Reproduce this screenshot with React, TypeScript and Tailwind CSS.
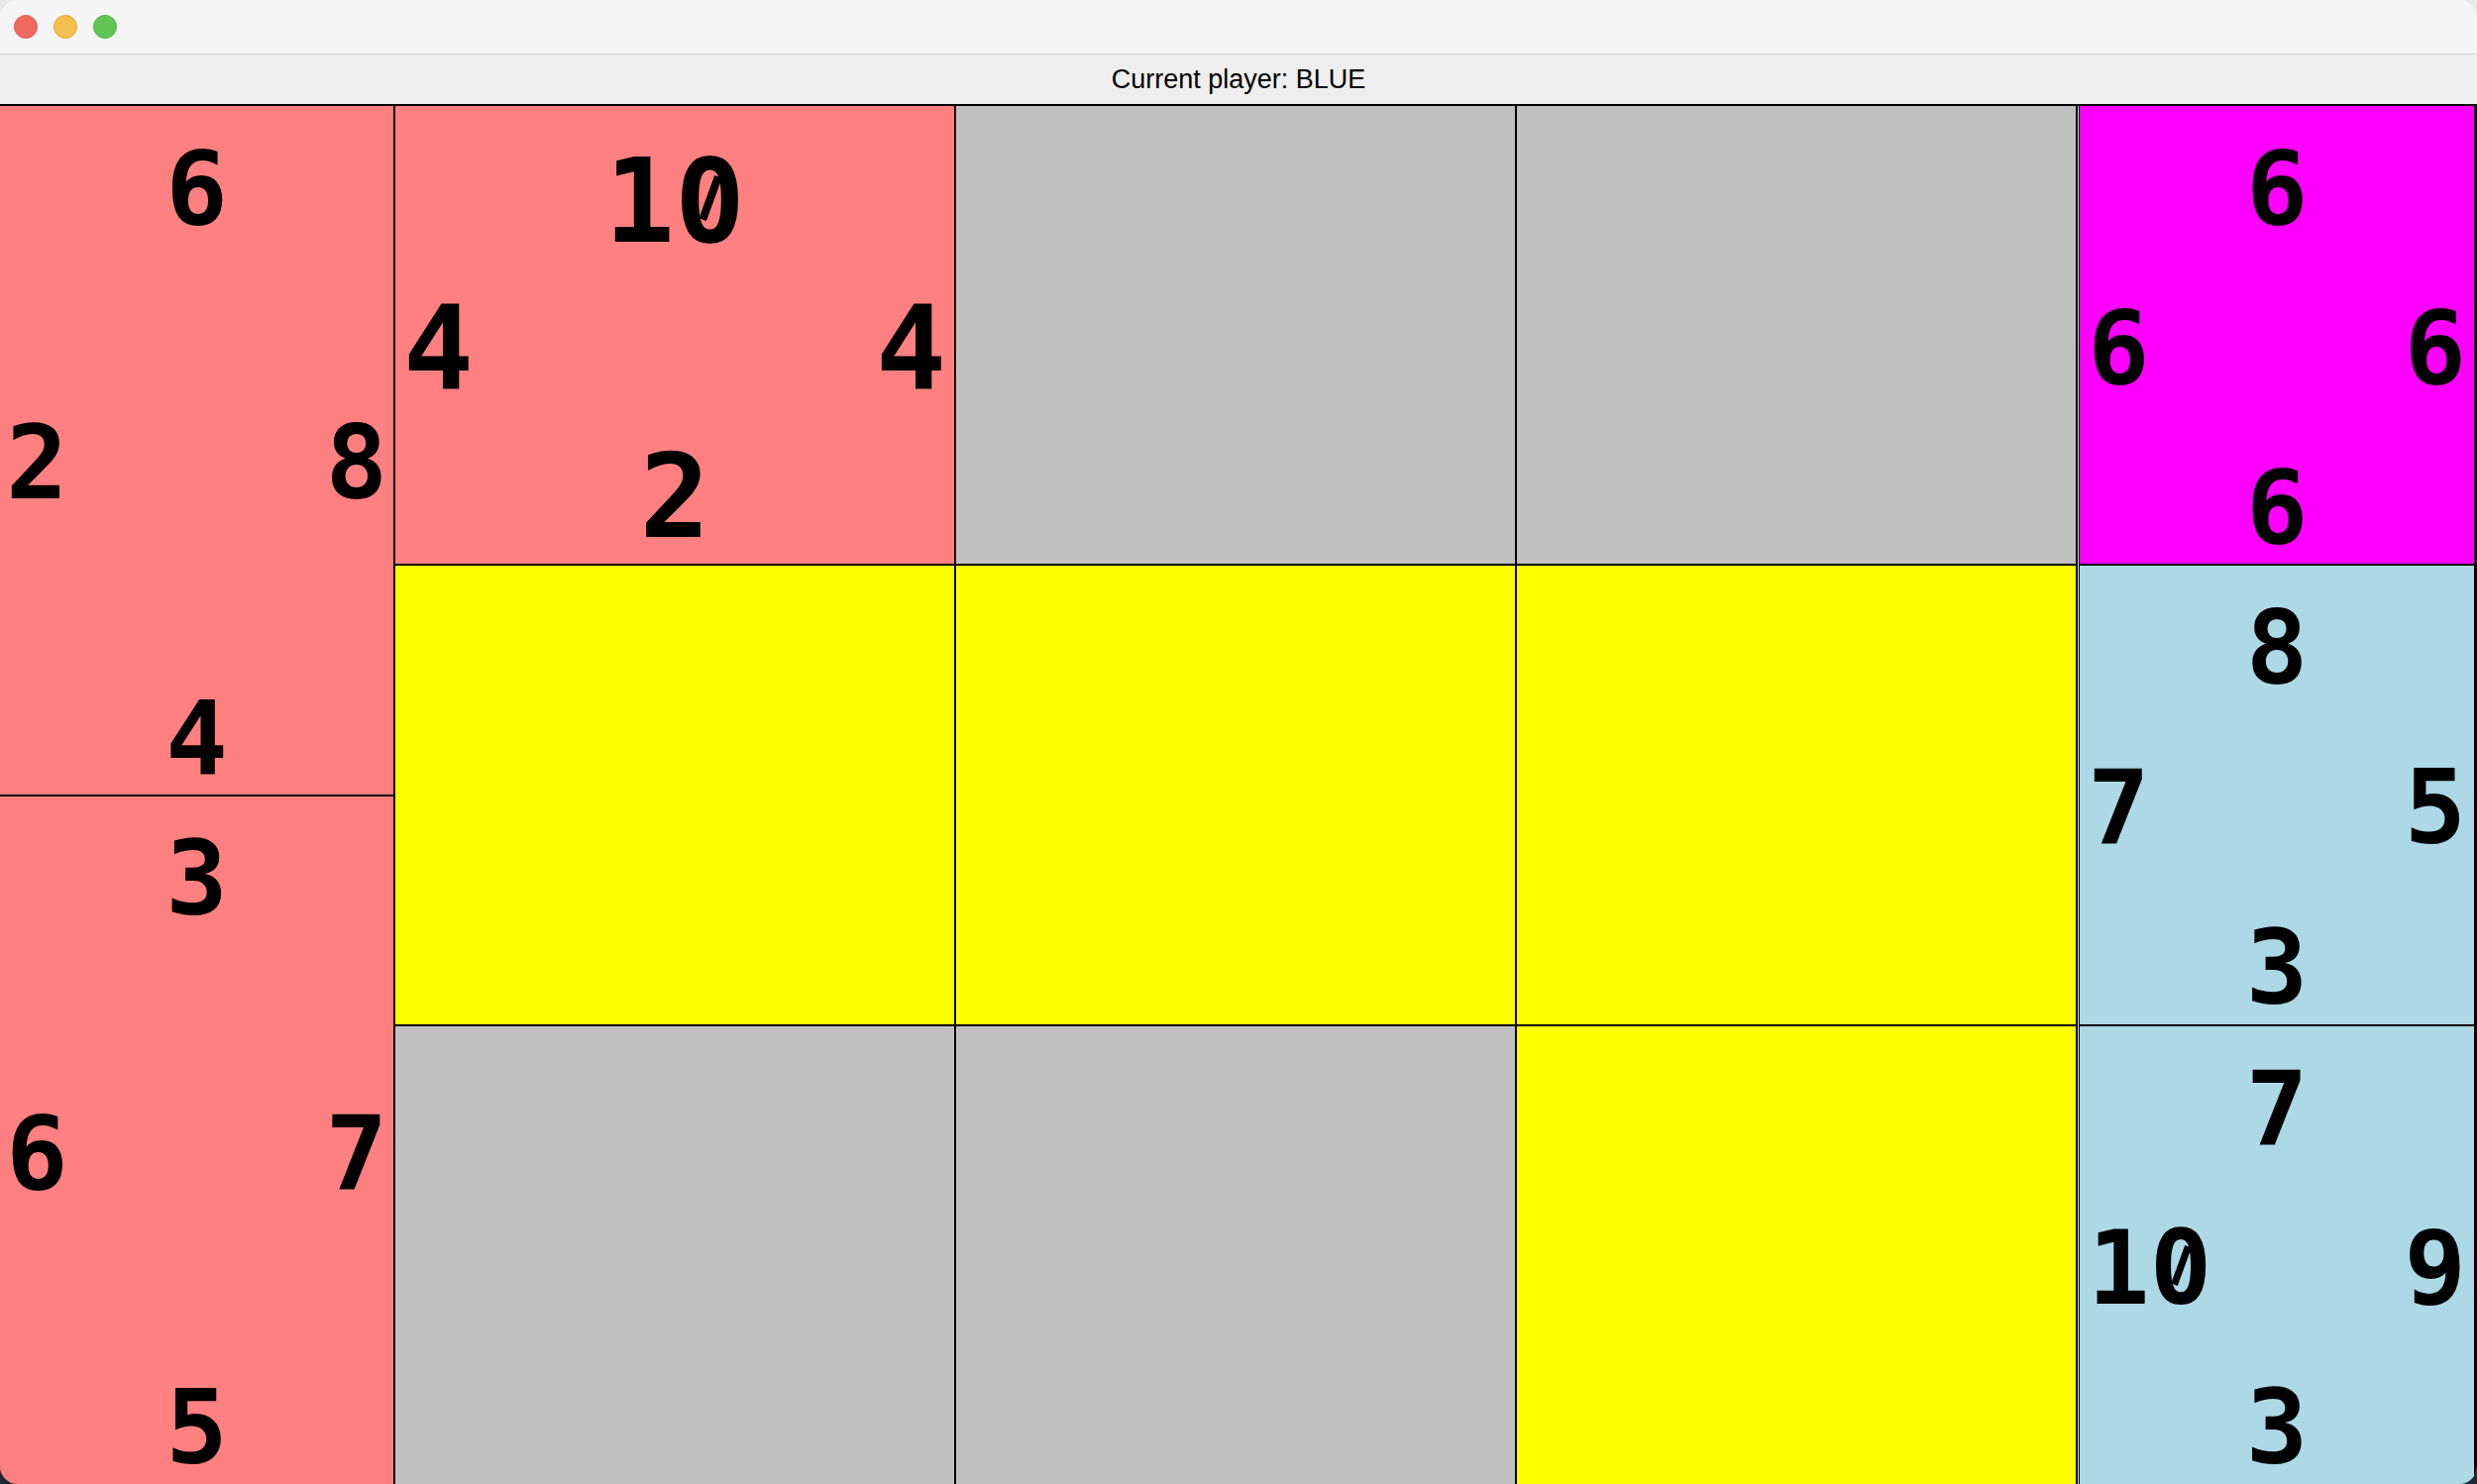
import React from "react";

type TileProps = {
  top?: string;
  left?: string;
  right?: string;
  bottom?: string;
  bg: string;
  size: "small" | "large" | "none";
  side?: string;
};

function Zero({ bg }: { bg: string }) {
  return (
    <span className="relative inline-block">
      0
      <span className={`absolute left-[0.226em] top-[0.35em] h-[0.26em] w-[0.15em] rounded-full ${bg}`} />
      <span className="absolute left-[0.2695em] top-[0.278em] h-[0.394em] w-[0.066em] rotate-[20deg] bg-black" />
    </span>
  );
}

function Num({ text, bg }: { text?: string; bg: string }) {
  if (!text) return null;
  return (
    <span className="inline-block">
      {text.split("").map((ch, i) =>
        ch === "0" ? <Zero key={i} bg={bg} /> : <React.Fragment key={i}>{ch}</React.Fragment>
      )}
    </span>
  );
}

function Tile({ top, left, right, bottom, bg, size, side }: TileProps) {
  if (size === "none") {
    return <div className={`${bg} min-h-0 min-w-0`} />;
  }
  const variant =
    size === "large"
      ? "text-[118px] pt-[37px] pb-[9px] px-[8px]"
      : side === "left"
      ? "text-[104px] pt-[31px] pb-[5px] px-[6px]"
      : "text-[104px] pt-[31px] pb-[5px] px-[8px]";
  return (
    <div
      className={`${bg} ${variant} flex min-h-0 min-w-0 flex-1 flex-col font-['DejaVu_Sans_Mono',monospace] font-bold leading-none text-black`}
    >
      <div className="text-center">
        <Num text={top} bg={bg} />
      </div>
      <div className="flex flex-1 items-center justify-between">
        <Num text={left} bg={bg} />
        <Num text={right} bg={bg} />
      </div>
      <div className="text-center">
        <Num text={bottom} bg={bg} />
      </div>
    </div>
  );
}

export default function App() {
  return (
    <div className="h-[1498px] w-[2500px] overflow-hidden bg-[linear-gradient(#e9e9e9_50%,#1c2833_50%)]">
      <div className="flex h-full w-full flex-col overflow-hidden rounded-[18px] bg-[#eeeeee]">
        {/* title bar */}
        <div className="flex h-[55px] shrink-0 items-center gap-[16px] border-b border-[#d2d2d2] bg-[#f5f5f5] pl-[14px]">
          <div className="h-[24px] w-[24px] rounded-full border border-[#dc5b50] bg-[#ee6a5f]" />
          <div className="h-[24px] w-[24px] rounded-full border border-[#dea63c] bg-[#f5bf4f]" />
          <div className="h-[24px] w-[24px] rounded-full border border-[#52ad45] bg-[#61c554]" />
        </div>
        {/* header */}
        <div className="flex h-[50px] shrink-0 items-center justify-center bg-[#eeeeee] pt-[1px] font-['Liberation_Sans',Arial,sans-serif] text-[27px] text-black">
          Current player: BLUE
        </div>
        {/* board */}
        <div className="flex min-h-0 flex-1 bg-black pt-[2px]">
          <div className="flex w-[397px] shrink-0 flex-col gap-[2px]">
            <Tile bg="bg-[#ff8080]" size="small" side="left" top="6" left="2" right="8" bottom="4" />
            <Tile bg="bg-[#ff8080]" size="small" side="left" top="3" left="6" right="7" bottom="5" />
          </div>
          <div className="ml-[2px] grid w-[1696px] shrink-0 grid-cols-3 grid-rows-3 gap-[2px]">
            <Tile bg="bg-[#ff8080]" size="large" top="10" left="4" right="4" bottom="2" />
            <Tile bg="bg-[#c0c0c0]" size="none" />
            <Tile bg="bg-[#c0c0c0]" size="none" />
            <Tile bg="bg-[#ffff00]" size="none" />
            <Tile bg="bg-[#ffff00]" size="none" />
            <Tile bg="bg-[#ffff00]" size="none" />
            <Tile bg="bg-[#c0c0c0]" size="none" />
            <Tile bg="bg-[#c0c0c0]" size="none" />
            <Tile bg="bg-[#ffff00]" size="none" />
          </div>
          <div className="ml-[2px] w-[1px] shrink-0 bg-[#dcdcdc]" />
          <div className="ml-[1px] flex w-[398px] shrink-0 flex-col gap-[2px]">
            <Tile bg="bg-[#ff00ff]" size="small" top="6" left="6" right="6" bottom="6" />
            <Tile bg="bg-[#add8e6]" size="small" top="8" left="7" right="5" bottom="3" />
            <Tile bg="bg-[#add8e6]" size="small" top="7" left="10" right="9" bottom="3" />
          </div>
        </div>
      </div>
    </div>
  );
}
